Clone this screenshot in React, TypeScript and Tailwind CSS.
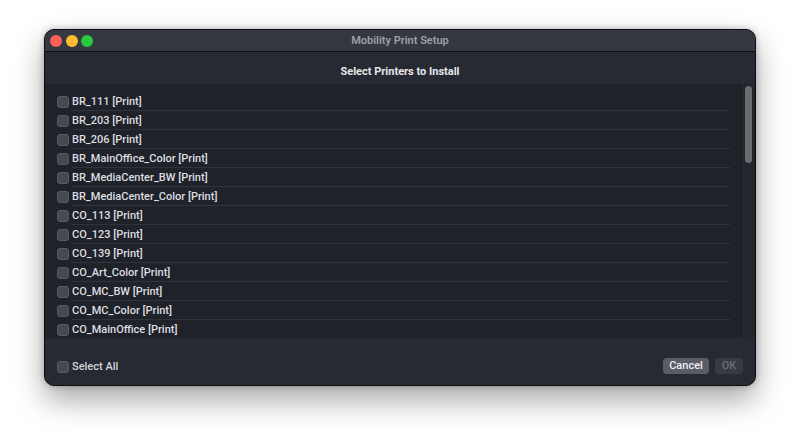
import React from "react";

const printers = [
  "BR_111",
  "BR_203",
  "BR_206",
  "BR_MainOffice_Color",
  "BR_MediaCenter_BW",
  "BR_MediaCenter_Color",
  "CO_113",
  "CO_123",
  "CO_139",
  "CO_Art_Color",
  "CO_MC_BW",
  "CO_MC_Color",
  "CO_MainOffice",
];

function Box() {
  return (
    <span className="block h-[12px] w-[12px] shrink-0 rounded-[3px] border border-[#5a5c64] bg-[#474951]" />
  );
}

export default function App() {
  return (
    <div
      className="h-[444px] w-[800px] overflow-hidden bg-white pl-[44px] pt-[29px]"
      style={{ fontFamily: "Roboto, 'Liberation Sans', sans-serif" }}
    >
      <div className="flex h-[357px] w-[712px] flex-col overflow-hidden rounded-[10px] border border-[#0d0e12] bg-[#282a33] shadow-[0_14px_30px_rgba(0,0,0,0.35),0_0_6px_rgba(0,0,0,0.25)]">
        {/* title bar */}
        <div className="relative flex h-[22px] shrink-0 items-center justify-center border-b border-[#0f1014] bg-[#363841] pt-[2px]">
          <div className="absolute left-[5px] top-[5px] flex gap-[3.5px]">
            <span className="h-[12px] w-[12px] rounded-full bg-[#fe5f57]" />
            <span className="h-[12px] w-[12px] rounded-full bg-[#febc2e]" />
            <span className="h-[12px] w-[12px] rounded-full bg-[#28c840]" />
          </div>
          <span className="text-[11px] font-semibold text-[#9d9fa6]">Mobility Print Setup</span>
        </div>

        {/* heading */}
        <div className="flex h-[32px] shrink-0 items-center justify-center bg-[#282a33] pt-[8px]">
          <span className="text-[11px] font-bold text-[#e6e6e8]">Select Printers to Install</span>
        </div>

        {/* printer list */}
        <div className="flex h-[254px] shrink-0 bg-[#1f2229]">
          <div className="flex-1 overflow-hidden pt-[8px]">
            {printers.map((p) => (
              <div key={p} className="flex h-[19px] items-center pl-[12px]">
                <Box />
                <div className="ml-[3px] mr-[13px] flex h-full flex-1 items-center border-b border-[#30333b] pt-[2px]">
                  <span className="text-[11px] font-medium text-[#dddee0]">{p} [Print]</span>
                </div>
              </div>
            ))}
          </div>
          <div className="w-[12px] shrink-0 border-l border-[#2a2c33] bg-[#24262d] pl-[1px] pt-[2px]">
            <div className="h-[77px] w-[7px] rounded-full bg-[#6b6c70]" />
          </div>
        </div>

        {/* footer */}
        <div className="flex flex-1 items-start justify-between bg-[#282a33] pl-[12px] pr-[12px] pt-[21px]">
          <div className="flex h-[16px] items-center gap-[3px]">
            <Box />
            <span className="text-[11px] font-medium text-[#d3d4d7]">Select All</span>
          </div>
          <div className="-mt-[1px] flex gap-[6px]">
            <button className="flex h-[16px] w-[46px] items-center justify-center rounded-[4px] bg-[#5a5c66] text-[11px] font-medium text-[#eeeef0]">
              Cancel
            </button>
            <button className="flex h-[16px] w-[28px] items-center justify-center rounded-[4px] bg-[#383b44] text-[11px] font-medium text-[#6a6d75]">
              OK
            </button>
          </div>
        </div>
      </div>
    </div>
  );
}
